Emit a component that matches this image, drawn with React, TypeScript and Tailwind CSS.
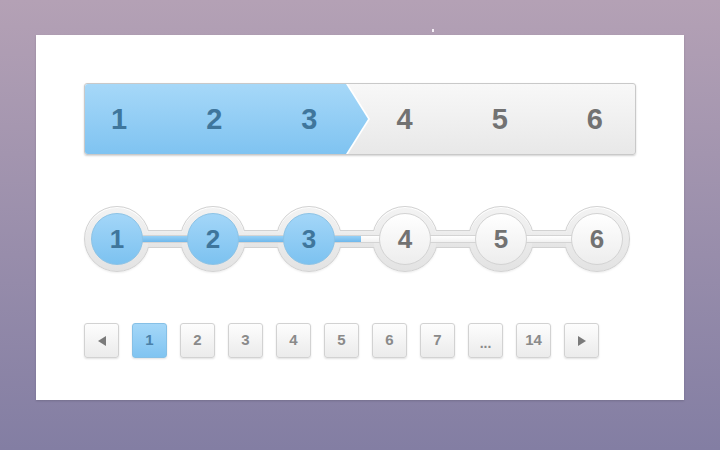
import React from "react";

const nums = ["1", "2", "3", "4", "5", "6"];

function StepBar() {
  return (
    <div className="relative h-[72px] w-[552px] rounded-[3px] border border-[#c9c9c9] bg-gradient-to-b from-[#f8f8f8] to-[#e8e8e8] shadow-[0_1px_2px_rgba(0,0,0,0.18)]">
      <div className="absolute inset-0 [filter:drop-shadow(2px_0_0_#ffffff)]">
        <div className="h-full w-[284px] rounded-l-[3px] bg-gradient-to-b from-[#a6d8f8] to-[#7fc3f1] [clip-path:polygon(0_0,261px_0,283px_50%,261px_100%,0_100%)]" />
      </div>
      <div className="relative flex h-full items-center justify-between pl-[26px] pr-[32px]">
        {nums.map((n, i) => (
          <span
            key={n}
            className={`text-[29px] font-bold leading-none ${i < 3 ? "text-[#3f769c]" : "text-[#727272]"}`}
          >
            {n}
          </span>
        ))}
      </div>
    </div>
  );
}

const segLefts = ["left-[64px]", "left-[160px]", "left-[256px]", "left-[352px]", "left-[448px]"];

function CircleSteps() {
  return (
    <div className="relative h-[66px] w-[546px]">
      {segLefts.map((l) => (
        <div
          key={l}
          className={`absolute top-[24px] z-10 h-[18px] w-[34px] border-y border-[#d2d2d2] bg-gradient-to-b from-[#eeeeee] to-[#e4e4e4] ${l}`}
        />
      ))}
      <div className="absolute left-[33px] top-[29px] z-[15] h-[8px] w-[480px] rounded-[4px] border border-[#d4d4d4] bg-gradient-to-b from-[#ffffff] to-[#f1f1f1]">
        <div className="h-full w-[243px] rounded-l-[3px] bg-gradient-to-b from-[#95d0f6] to-[#6fb8ec]" />
      </div>
      <div className="flex h-full items-center justify-between">
        {nums.map((n, i) => (
          <div
            key={n}
            className="flex h-[66px] w-[66px] items-center justify-center rounded-full border border-[#d2d2d2] bg-gradient-to-b from-[#f3f3f3] to-[#e3e3e3] shadow-[inset_0_1px_0_#ffffff,0_1px_2px_rgba(0,0,0,0.07)]"
          >
            <div
              className={`relative z-20 flex h-[52px] w-[52px] items-center justify-center rounded-full border ${
                i < 3
                  ? "border-[#8cc3e6] bg-gradient-to-b from-[#a3d6f8] to-[#7cc2f0]"
                  : "border-[#d3d3d3] bg-gradient-to-b from-[#ffffff] to-[#ededed]"
              }`}
            >
              <span
                className={`text-[26px] font-bold leading-none ${i < 3 ? "text-[#3f769c]" : "text-[#727272]"}`}
              >
                {n}
              </span>
            </div>
          </div>
        ))}
      </div>
    </div>
  );
}

function PageBtn({ children, active }: { children: React.ReactNode; active?: boolean }) {
  return (
    <div
      className={`flex h-[35px] w-[35px] items-center justify-center rounded-[3px] border text-[15px] font-bold shadow-[0_1px_2px_rgba(0,0,0,0.12)] ${
        active
          ? "border-[#86c0e6] bg-gradient-to-b from-[#a4d7f8] to-[#80c4f1] text-[#4a80a8]"
          : "border-[#d2d2d2] bg-gradient-to-b from-[#fdfdfd] to-[#ebebeb] text-[#8a8a8a]"
      }`}
    >
      {children}
    </div>
  );
}

function Pagination() {
  return (
    <div className="flex gap-[13px]">
      <PageBtn>
        <svg width="10" height="10" viewBox="0 0 10 10">
          <polygon points="9,0 9,10 1,5" fill="#7a7a7a" />
        </svg>
      </PageBtn>
      <PageBtn active>1</PageBtn>
      {["2", "3", "4", "5", "6", "7"].map((n) => (
        <PageBtn key={n}>{n}</PageBtn>
      ))}
      <PageBtn>
        <span className="mt-[4px] text-[14px] leading-none">...</span>
      </PageBtn>
      <PageBtn>14</PageBtn>
      <PageBtn>
        <svg width="10" height="10" viewBox="0 0 10 10">
          <polygon points="1,0 1,10 9,5" fill="#7a7a7a" />
        </svg>
      </PageBtn>
    </div>
  );
}

export default function App() {
  return (
    <div
      className="relative h-[450px] w-[720px] overflow-hidden bg-gradient-to-b from-[#b4a1b5] to-[#837ea3]"
      style={{ fontFamily: '"Liberation Sans", Arial, sans-serif' }}
    >
      <div className="absolute left-[432px] top-[29px] h-[3px] w-[2px] bg-[#f4eef5]" />
      <div className="ml-[36px] pt-[35px]">
        <div className="flex h-[365px] w-[648px] flex-col bg-white pl-[48px] pt-[48px] shadow-[0_1px_2px_rgba(0,0,0,0.15)]">
          <StepBar />
          <div className="mt-[51px]">
            <CircleSteps />
          </div>
          <div className="mt-[51px]">
            <Pagination />
          </div>
        </div>
      </div>
    </div>
  );
}
